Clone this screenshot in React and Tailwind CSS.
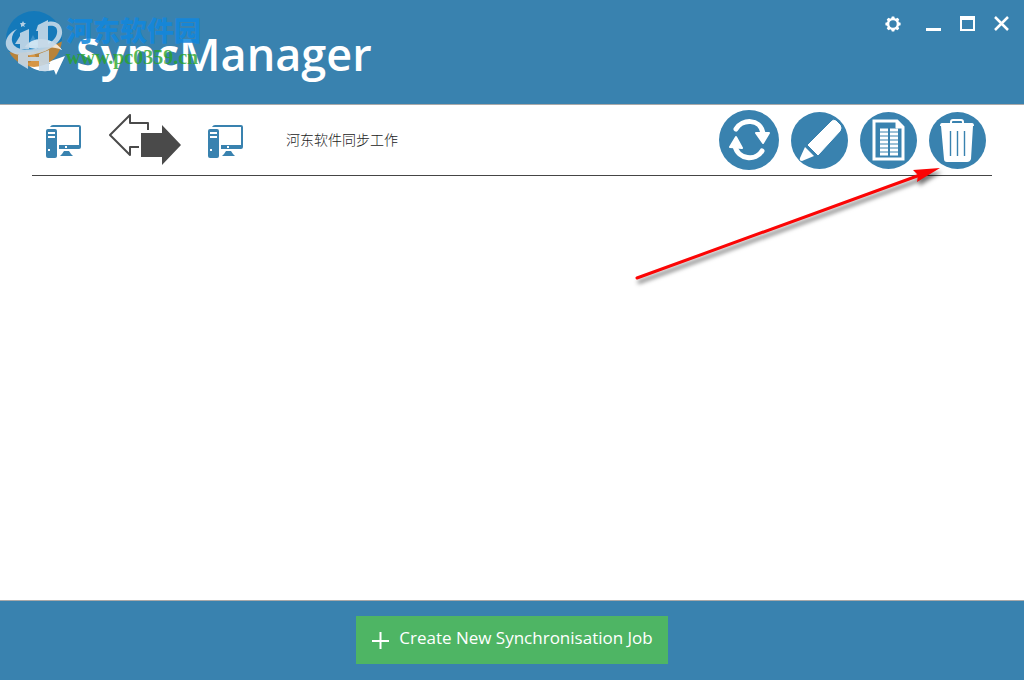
import { useState } from "react";

// ==========================
// LOGO
// ==========================
function LogoMark() {
  return (
    <svg viewBox="0 0 76 104" className="w-[76px] h-[104px] shrink-0" aria-hidden="true">
      <path
        d="M25 47C32 36 52 36 62 50C52 44 40 44 34 49C33 58 42 64 50 64L48 62L65 56L56 75L54 70C42 73 31 70 26 62C30 64 32 62 31 58C27 54 26 51 25 47Z"
        fill="#fff"
      />
    </svg>
  );
}

function SiteBadge() {
  return (
    <div className="absolute left-0 top-0 pointer-events-none">
      <svg viewBox="0 0 70 80" className="w-[70px] h-[80px]" aria-hidden="true">
        <defs>
          <clipPath id="disc">
            <circle cx="34" cy="39" r="28" />
          </clipPath>
        </defs>
        <g clipPath="url(#disc)" opacity="0.85">
          <path d="M0 0H70V38Q50 56 8 52L0 45Z" fill="#0f78bd" />
          <path d="M8 52Q42 56 70 36V80H0Z" fill="#cf8426" />
        </g>
        <path d="M28 45L33 35L38 45Z" fill="#3d93cc" />
        <path
          d="M25 47C32 36 52 36 62 50C54 46 42 47 36 49Z"
          fill="#fff"
          opacity="0.75"
        />
        <g fill="#c6d9e8" opacity="0.9">
          <path d="M15 44L20 36V33L29 29V49H20V44Z" />
          <path d="M36 31L38 25L48 20V46L38 48V31Z" />
          <path d="M18 55H28V57H39V54L49 50V71L39 71V61H28V69L18 63Z" />
          <path d="M17 29C10 35 9 46 21 49C37 52 56 43 57 33C58 27 54 25 48 26V22C56 20 63 25 62 34C59 50 30 59 15 54C1 49 4 35 17 29Z" />
          <path d="M23 21L24 23L26 23L24 25L25 27L23 26L21 27L21 25L20 23L22 23Z" />
        </g>
      </svg>
      <div className="absolute left-[66px] top-[12px] whitespace-nowrap">
        <div className="font-['Noto_Sans_CJK_SC',sans-serif] text-[27px] leading-[35px] font-black text-[#1287dd]/90">
          河东软件园
        </div>
        <div className="font-['Liberation_Serif',serif] text-[20px] leading-[20px] font-bold text-[#28a428]/80">
          www.pc0359.cn
        </div>
      </div>
    </div>
  );
}

// ==========================
// ICONS
// ==========================
function GearIcon() {
  const teeth = [0, 45, 90, 135, 180, 225, 270, 315];
  return (
    <svg viewBox="0 0 16 16" className="w-4 h-4" aria-hidden="true">
      <circle cx="8" cy="8" r="4.9" fill="none" stroke="#fff" strokeWidth="2.4" />
      {teeth.map((a) => (
        <path key={a} d="M6 3L6.8 .4H9.2L10 3Z" fill="#fff" transform={`rotate(${a} 8 8)`} />
      ))}
    </svg>
  );
}

function ComputerIcon() {
  return (
    <svg viewBox="0 -4 36 38" className="w-9 h-[38px]" aria-hidden="true">
      <path d="M4 2Q5 0 7 0H33Q35 0 35 2V22Q35 24 33 24H13V20H33V2Z" fill="#3982af" />
      <path d="M18 26H23L25 29L27 31H14L16 29Z" fill="#3982af" />
      <rect x="0" y="4" width="11" height="29" rx="2" fill="#3982af" />
      <path d="M2 8H9M2 12H9" stroke="#fff" strokeWidth="2" />
      <path d="M2 25H4M19 22H21" stroke="#fff" strokeWidth="2" />
    </svg>
  );
}

function DirectionIcon() {
  return (
    <svg viewBox="0 0 72 52" className="w-[72px] h-[52px]" aria-hidden="true">
      <path
        d="M30 33H21V41L1 21L21 1V9H39V16"
        fill="none"
        stroke="#4a4a4a"
        strokeWidth="2"
        strokeLinejoin="round"
      />
      <path d="M32 19H53V11L72 31L53 51V43H32Z" fill="#4a4a4a" />
    </svg>
  );
}

function SyncIcon() {
  return (
    <svg viewBox="0 0 60 60" className="w-[60px] h-[60px]" aria-hidden="true">
      <circle cx="30" cy="30" r="30" fill="#3982af" />
      <g fill="none" stroke="#fff" strokeWidth="5" strokeLinecap="round">
        <path d="M17 19C23 9 41 8 44 23" />
        <path d="M43 41C37 51 19 50 16 36" />
      </g>
      <path
        d="M37 23H50L44 33Z M11 37L17 27L23 38Z"
        fill="#fff"
        stroke="#fff"
        strokeWidth="2"
        strokeLinejoin="round"
      />
    </svg>
  );
}

function EditIcon() {
  return (
    <svg viewBox="0 0 57 57" className="w-[57px] h-[57px]" aria-hidden="true">
      <circle cx="28.5" cy="28.5" r="28.5" fill="#3982af" />
      <path
        d="M17 33L40 10Q42 7 45 9L49 13Q51 16 49 19L27 43Z"
        fill="#fff"
        stroke="#fff"
        strokeLinejoin="round"
      />
      <path d="M14 35L23 44L11 49Q8 49 9 46Z" fill="#fff" />
    </svg>
  );
}

function LogIcon() {
  const rows = [18, 22, 26, 30, 34, 38, 42];
  return (
    <svg viewBox="0 0 57 57" className="w-[57px] h-[57px]" aria-hidden="true">
      <circle cx="28.5" cy="28.5" r="28.5" fill="#3982af" />
      <path d="M14 9H37L43 15V47H14Z" fill="none" stroke="#fff" strokeWidth="3" />
      <path d="M36 9V16H44" fill="#fff" stroke="#fff" />
      {rows.map((y) => (
        <path key={y} d={`M20 ${y}H28M30 ${y}H38`} stroke="#fff" strokeWidth="2.8" />
      ))}
    </svg>
  );
}

function TrashIcon() {
  return (
    <svg viewBox="0 0 57 57" className="w-[57px] h-[57px]" aria-hidden="true">
      <circle cx="28.5" cy="28.5" r="28.5" fill="#3982af" />
      <path d="M22 11V10Q22 8 24 8H32Q34 8 34 10V11" fill="none" stroke="#fff" strokeWidth="2" />
      <path d="M13 11H43Q45 11 45 14H11Q11 11 13 11Z" fill="#fff" />
      <path d="M12 14H44L42 47Q41 50 38 50H18Q15 50 15 47Z" fill="#fff" />
      <path d="M21.5 19V44M28.5 19V44M35.5 19V44" stroke="#3982af" strokeWidth="1.4" />
    </svg>
  );
}

function PointerArrow() {
  return (
    <svg
      viewBox="0 0 320 130"
      className="absolute right-[72px] top-[160px] w-[320px] h-[130px] pointer-events-none drop-shadow-[2px_4px_2px_rgba(0,0,0,0.55)]"
      aria-hidden="true"
    >
      <path d="M5 118L288 15" stroke="#fb0505" strokeWidth="3" strokeLinecap="round" />
      <path d="M308 8L281 10L286 15L285 22Z" fill="#fb0505" />
    </svg>
  );
}

// ==========================
// UI
// ==========================
export default function App() {
  const [jobs, setJobs] = useState([{ id: 1, name: "河东软件同步工作" }]);

  const addJob = () => {
    setJobs((list) => [...list, { id: Date.now(), name: "New job" }]);
  };

  const removeJob = (id) => {
    setJobs((list) => list.filter((job) => job.id !== id));
  };

  return (
    <div className="relative min-h-screen flex flex-col bg-white font-['Open_Sans','Noto_Sans_CJK_SC',sans-serif]">
      {/* HEADER */}
      <header className="relative h-[105px] flex items-start justify-between bg-[#3982af] border-b border-[#a9a9a9]">
        <div className="flex items-start">
          <LogoMark />
          <h1 className="pt-6 text-[45px] leading-[60px] font-semibold text-white">
            <span className="font-bold">Sync</span>Manager
          </h1>
        </div>
        <SiteBadge />

        <div className="flex items-center pt-4 pr-[15px]">
          <button type="button" aria-label="Settings" className="mr-6">
            <GearIcon />
          </button>
          <div className="flex gap-[18px]">
            <button type="button" aria-label="Minimize">
              <svg viewBox="0 0 16 16" className="w-4 h-4" aria-hidden="true">
                <path d="M1 13.5H16" stroke="#fff" strokeWidth="3" />
              </svg>
            </button>
            <button type="button" aria-label="Maximize">
              <svg viewBox="0 0 16 16" className="w-4 h-4" aria-hidden="true">
                <path d="M1 0H16V15H1ZM3 4V13H14V4Z" fill="#fff" fillRule="evenodd" />
              </svg>
            </button>
            <button type="button" aria-label="Close">
              <svg viewBox="0 0 16 16" className="w-4 h-4" aria-hidden="true">
                <path d="M2 1L15 14M15 1L2 14" stroke="#fff" strokeWidth="2.5" />
              </svg>
            </button>
          </div>
        </div>
      </header>

      {/* JOB LIST */}
      <main className="flex-1 px-8">
        <ul>
          {jobs.map((job) => (
            <li
              key={job.id}
              className="h-[71px] flex items-center border-b border-[#454545] pl-[14px] pr-1.5"
            >
              <ComputerIcon />
              <span className="mx-[27px]">
                <DirectionIcon />
              </span>
              <ComputerIcon />
              <span className="ml-[42px] flex-1 text-sm font-light text-[#222]">{job.name}</span>

              <div className="flex items-center gap-3">
                <button type="button" aria-label="Synchronise">
                  <SyncIcon />
                </button>
                <button type="button" aria-label="Edit">
                  <EditIcon />
                </button>
                <button type="button" aria-label="Log">
                  <LogIcon />
                </button>
                <button type="button" aria-label="Delete" onClick={() => removeJob(job.id)}>
                  <TrashIcon />
                </button>
              </div>
            </li>
          ))}
        </ul>
      </main>

      {/* FOOTER */}
      <footer className="h-20 flex items-start justify-center bg-[#3982af] border-t border-[#a9a9a9] pt-[15px]">
        <button
          type="button"
          onClick={addJob}
          className="h-12 flex items-center bg-[#4eb564] px-[15px] text-[17px] text-white"
        >
          <svg viewBox="0 0 18 18" className="w-[18px] h-[18px] mr-2.5" aria-hidden="true">
            <path d="M1 10H18M9.5 1V18" stroke="#fff" strokeWidth="2" />
          </svg>
          <span className="pb-1">Create New Synchronisation Job</span>
        </button>
      </footer>

      <PointerArrow />
    </div>
  );
}
